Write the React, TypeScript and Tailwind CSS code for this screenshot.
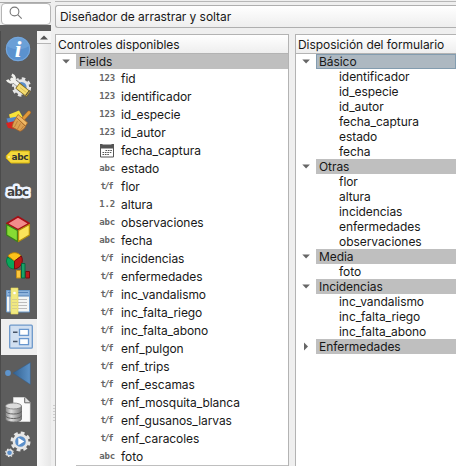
import React from "react";

type Kind = "123" | "abc" | "t/f" | "1.2" | "date";

const fields: [Kind, string][] = [
  ["123", "fid"],
  ["123", "identificador"],
  ["123", "id_especie"],
  ["123", "id_autor"],
  ["date", "fecha_captura"],
  ["abc", "estado"],
  ["t/f", "flor"],
  ["1.2", "altura"],
  ["abc", "observaciones"],
  ["abc", "fecha"],
  ["t/f", "incidencias"],
  ["t/f", "enfermedades"],
  ["t/f", "inc_vandalismo"],
  ["t/f", "inc_falta_riego"],
  ["t/f", "inc_falta_abono"],
  ["t/f", "enf_pulgon"],
  ["t/f", "enf_trips"],
  ["t/f", "enf_escamas"],
  ["t/f", "enf_mosquita_blanca"],
  ["t/f", "enf_gusanos_larvas"],
  ["t/f", "enf_caracoles"],
  ["abc", "foto"],
];

const groups: { name: string; items: string[]; selected?: boolean }[] = [
  {
    name: "Básico",
    selected: true,
    items: ["identificador", "id_especie", "id_autor", "fecha_captura", "estado", "fecha"],
  },
  { name: "Otras", items: ["flor", "altura", "incidencias", "enfermedades", "observaciones"] },
  { name: "Media", items: ["foto"] },
  { name: "Incidencias", items: ["inc_vandalismo", "inc_falta_riego", "inc_falta_abono"] },
  { name: "Enfermedades", items: [] },
];

function Gear({ cx, cy, r, dash }: { cx: number; cy: number; r: number; dash: string }) {
  return (
    <g>
      <circle cx={cx} cy={cy} r={r} fill="none" stroke="#e6e6e6" strokeWidth={r * 0.3} strokeDasharray={dash} />
      <circle cx={cx} cy={cy} r={r * 0.76} fill="#5b8fca" stroke="#e6e6e6" strokeWidth={r * 0.3} />
    </g>
  );
}

const icons: React.ReactNode[] = [
  <>
    <circle cx="18" cy="18" r="12.2" fill="#5b92cf" />
    <path d="M7 15a11.300 11.300 0 0 1 22 0c-6 4-15 5-22 0z" fill="#7badE0" opacity=".5" />
    <circle cx="18" cy="18" r="11.700" fill="none" stroke="#79a9dc" />
    <text x="18" y="26" textAnchor="middle" fontSize="24" fontStyle="italic" fontWeight="700" fontFamily="Liberation Serif, serif" fill="#fff">i</text>
  </>,
  <>
    <Gear cx={21.5} cy={20} r={8.4} dash="3.500 3.100" />
    <path d="M12 12 21 20" stroke="#5d5d5d" strokeWidth="5" />
    <path d="M12 12.500 20.500 19.500" stroke="#f1f1ed" strokeWidth="3.600" strokeLinecap="round" />
    <path d="M11.800 7.700c3 1.300 3.600 4.300 1.700 6.300s-5 1.700-6.200-1.200" fill="none" stroke="#f1f1ed" strokeWidth="2.800" />
    <path d="M17.500 18.500 28.500 27.200" stroke="#80671d" strokeWidth="7" />
    <path d="M18 19 28 26.800" stroke="#f5dd72" strokeWidth="5.500" />
    <path d="M25.500 28.500 29.500 23.500" stroke="#4c4530" strokeWidth="1.200" />
    <path d="M20 20.500 26.500 25.500" stroke="#d4b543" strokeWidth=".7" />
  </>,
  <>
    <path d="m9 11.500 10-4 4 7-12 4z" fill="#f7e239" />
    <path d="m6.500 15.500 11-2 1 5-10 3z" fill="#5688c9" />
    <path d="m6 20 9-2v8l-7-1z" fill="#d92320" />
    <path d="m23.500 15.500 5.500-6" stroke="#a86724" strokeWidth="4" strokeLinecap="round" />
    <path d="m23.500 15.500 5.500-6" stroke="#e09a3b" strokeWidth="2.700" strokeLinecap="round" />
    <path d="m16.500 14.500 9 9c-1 2-3 4-5.500 4.800L12 24c1-3 1-5 4.500-9.500z" fill="#dca153" stroke="#a76327" strokeWidth=".8" />
    <path d="m18 11.500 9.500 8.300-2 3.200-9.200-8.600z" fill="#efb865" stroke="#aa6720" strokeWidth=".8" />
    <path d="m17.500 18-3 6m6-3.500-3 5.500m6-3-3 4" stroke="#b27231" strokeWidth=".7" />
  </>,
  <>
    <path d="M11 12h18.300v12H11L6.300 19.200v-2.400z" fill="#f5d93b" stroke="#d7b40c" strokeLinejoin="round" />
    <circle cx="9" cy="18" r="1" fill="#fff6a4" />
    <text x="20" y="21.200" textAnchor="middle" fontSize="9" fontWeight="700" fontFamily="DejaVu Sans, sans-serif" textLength="17" fill="#333">abc</text>
  </>,
  <>
    <text x="18" y="21.300" textAnchor="middle" fontSize="12" fontWeight="700" fontFamily="DejaVu Sans, sans-serif" textLength="22" fill="#eef4ff" stroke="#eef4ff" strokeWidth="5" strokeLinejoin="round" aria-hidden="true">abc</text>
    <text x="18" y="21.300" textAnchor="middle" fontSize="12" fontWeight="700" fontFamily="DejaVu Sans, sans-serif" textLength="22" fill="#414141">abc</text>
  </>,
  <>
    <path d="m18 5.700 11.200 6.800L18 18.700 6.800 12.500z" fill="#f28b8b" stroke="#a50f16" strokeWidth="1.700" strokeLinejoin="round" />
    <path d="M6.600 13.500 17.500 19.500v11L6.600 24z" fill="#86db33" stroke="#39801b" strokeWidth="1.300" strokeLinejoin="round" />
    <path d="M29.400 13.500 18.500 19.500v11L29.400 24z" fill="#fbe45a" stroke="#b4900c" strokeWidth="1.300" strokeLinejoin="round" />
  </>,
  <>
    <path d="M14.500 14V22a8 8 0 0 1-7-12z" fill="#08a75b" stroke="#087642" />
    <path d="M14.500 14 8 9a8 8 0 0 1 13 0z" fill="#fcc21a" stroke="#b88408" />
    <path d="m14.500 14 6.800-5c2.600 5 .2 12-6.800 13z" fill="#bd1717" stroke="#760e0e" />
    <path d="M16.500 23.500h4V31h-4z" fill="#fcc63e" stroke="#c28e18" />
    <path d="M25.500 24.500h4V31h-4z" fill="#b81b1b" stroke="#740d0d" />
    <path d="M21.500 16.500h3.500V31h-3.500z" fill="#19a366" stroke="#096442" />
  </>,
  <>
    <path d="M6.500 7.500h23v21.500h-23z" fill="#f4f6f5" stroke="#6d9ac9" />
    <path d="M7 8h22v5H7z" fill="#8db3dc" />
    <path d="M8 9.500h20M7 13h22M10 7v22" stroke="#5482b7" />
    <path d="M12 16.500h15M12 19.500h15M12 22.500h15M12 25.500h15" stroke="#bcbcbc" />
    <path d="M11 5h7v26h-7z" fill="#f1e982" stroke="#e5d751" strokeWidth=".6" />
    <path d="M12 16.500h5M12 19.500h5M12 22.500h5M12 25.500h5" stroke="#d8d08a" />
    <circle cx="14.500" cy="10" r="1.300" fill="#fff" />
  </>,
  <>
    <rect x="9.700" y="6.200" width="22.600" height="23" rx="1" fill="#d1dff0" stroke="#6c98ca" strokeWidth="1.300" />
    <path d="M13 13.200h4.500M13 22.500h4.500" stroke="#475365" strokeWidth="1.600" />
    <path d="M19.500 10.300h9v6h-9zM19.500 19.600h9v6h-9z" fill="#fff" stroke="#6997ce" strokeWidth="1.300" />
  </>,
  <>
    <defs>
      <linearGradient id="arrow"><stop stopColor="#326191" /><stop offset="1" stopColor="#5d93c8" /></linearGradient>
    </defs>
    <path d="M13 18 30.300 7.500v22z" fill="url(#arrow)" stroke="#335d89" strokeWidth=".5" />
    <circle cx="8" cy="18" r="2.900" fill="#5e94cc" />
  </>,
  <>
    <path d="M13.500 6.500H25l5 5v19H13.500z" fill="#fafafa" stroke="#ddd" strokeWidth=".7" />
    <path d="M24.700 6.500v5.300H30" fill="#ddd" stroke="#666" />
    <defs>
      <linearGradient id="disk"><stop stopColor="#858585" /><stop offset=".35" stopColor="#dfdfdf" /><stop offset="1" stopColor="#777" /></linearGradient>
    </defs>
    <path d="M5.500 15v13c0 4 16 4 16 0V15z" fill="url(#disk)" stroke="#666" strokeWidth=".8" />
    <path d="M5.500 20c0 4 16 4 16 0M5.500 24.500c0 4 16 4 16 0" fill="none" stroke="#626262" />
    <ellipse cx="13.500" cy="15" rx="8" ry="3" fill="#dcdcdc" stroke="#777" strokeWidth=".8" />
  </>,
  <>
    <Gear cx={20.5} cy={14.5} r={8.7} dash="3.800 3.030" />
    <path d="m18.300 10.700 6 3.800-6 3.800z" fill="#fff" />
    <Gear cx={9.5} cy={25.8} r={3.8} dash="1.500 1.480" />
  </>,
];

function Sidebar() {
  return (
    <div className="w-[37px] shrink-0 border-l border-[#4b4b4b] bg-[#5d5d5d]">
      {icons.map((icon, i) => (
        <div key={i} className={i === 8 ? "h-9 bg-[#efefef]" : "h-9"}>
          <svg className="block h-9 w-9" viewBox="1 0 36 36" fill="none">
            {icon}
          </svg>
        </div>
      ))}
    </div>
  );
}

function TypeIcon({ kind }: { kind: Kind }) {
  return (
    <svg className="ml-[22px] block h-[18px] w-[18px] shrink-0" viewBox="0 0 18 18">
      {kind === "date" ? (
        <g>
          <path d="M2.500 4.500h13v11.500h-13z" fill="#fff" stroke="#555" />
          <path d="M2 3h14v4.500H2z" fill="#555" />
          <path d="M4.500 3h9" stroke="#fff" strokeWidth="1" />
          <path d="M7.500 9.500h6.500M4.500 11.500h9.500M4.500 13.500h6.500" stroke="#555" strokeWidth="1.200" strokeDasharray="1.600 .8" />
        </g>
      ) : (
        <text x={kind === "t/f" ? 2.5 : 1.2} y="11.700" fontSize="9" fontWeight="700" fontFamily="DejaVu Sans Mono, monospace" textLength={kind === "t/f" ? 13 : 16} fill="#666">
          {kind}
        </text>
      )}
    </svg>
  );
}

function Arrow({ closed = false }: { closed?: boolean }) {
  return (
    <svg className="h-[15px] w-5 shrink-0" viewBox="0 0 20 15">
      <path d={closed ? "M8 3.500 12 7.500 8 11.500z" : "M6.300 5.500h7.600L10.100 9.500z"} fill="#666" />
    </svg>
  );
}

function GroupRow({ name, selected = false, closed = false }: { name: string; selected?: boolean; closed?: boolean }) {
  return (
    <div className="flex h-[15px]">
      <Arrow closed={closed} />
      <div className={selected ? "h-[15px] grow bg-[#adb8c1] pl-[3px] outline -outline-offset-1 outline-[#839caf]" : "grow bg-[#bfbfbf] pl-[3px]"}>
        {name}
      </div>
    </div>
  );
}

function Header({ title }: { title: string }) {
  return (
    <div className="h-[19px] shrink-0 border-b border-[#b3b3b3] bg-linear-to-b from-white to-[#eeeeee] pl-0.5 leading-[19px]">
      {title}
    </div>
  );
}

export default function App() {
  return (
    <div className="flex h-[466px] w-[456px] overflow-hidden bg-[#efefef] [font-family:Inter,sans-serif] text-[12px] leading-[15px] tracking-[-0.06px] whitespace-nowrap text-[#181818]">
      <div className="flex w-[51px] shrink-0 flex-col">
        <div className="h-[3px] shrink-0 border-b border-[#aaa]" />
        <div className="ml-px h-[22px] w-[50px] shrink-0 rounded-sm border border-[#b5b5b5] bg-white">
          <svg className="ml-[7px] h-5 w-4" viewBox="0 0 16 20" fill="none" stroke="#777" strokeWidth="1.100">
            <circle cx="5.500" cy="7.500" r="4.400" />
            <path d="m8.700 10.700 4 4" />
          </svg>
        </div>
        <div className="h-1.5 shrink-0 bg-[#5d5d5d]" />
        <div className="flex min-h-0 grow">
          <Sidebar />
          <div className="w-[14px] bg-linear-to-r from-[#fafafa] to-[#e7e7e7]">
            <div className="h-[13px] border-b border-[#b5b5b5] bg-[#f5f5f5]">
              <svg className="block h-3 w-3.5" viewBox="0 0 14 12">
                <path d="m3 8.500 4-4 4 4z" fill="#555" />
              </svg>
            </div>
          </div>
        </div>
      </div>

      <div className="flex w-1 shrink-0 flex-col items-end justify-end pb-[44px]">
        <svg className="h-[17px] w-0.5" viewBox="0 0 2 17">
          <path d="M1 0v17" stroke="#aaa" strokeDasharray="1 2" />
        </svg>
      </div>

      <div className="flex w-[401px] shrink-0 flex-col">
        <div className="h-0.5 w-full shrink-0 border-b border-[#b7b7b7]" />
        <div className="mt-[3px] h-[23px] shrink-0 rounded-l-[3px] border border-r-0 border-[#afafaf] bg-linear-to-b from-white to-[#eeeeee] pl-1 leading-[22px]">
          Diseñador de arrastrar y soltar
        </div>
        <div className="mt-1.5 flex min-h-0 grow gap-[6px]">
          <section className="flex w-[234px] shrink-0 flex-col overflow-hidden border-x border-t border-[#b3b3b3] bg-white">
            <Header title="Controles disponibles" />
            <GroupRow name="Fields" />
            {fields.map(([kind, name]) => (
              <div key={name} className="flex h-[18px] shrink-0 leading-[20px]">
                <div className="w-5 shrink-0" />
                <TypeIcon kind={kind} />
                <span className="pl-[5px]">{name}</span>
              </div>
            ))}
            <div className="ml-5 h-[3px] shrink-0 bg-[#bfbfbf]" />
          </section>
          <section className="flex grow flex-col border-t border-l border-[#b3b3b3] bg-white">
            <Header title="Disposición del formulario" />
            {groups.map((group) => (
              <div key={group.name}>
                <GroupRow name={group.name} selected={group.selected} closed={group.items.length === 0} />
                {group.items.map((item) => (
                  <div key={item} className="h-[15px] pl-[43px]">
                    {item}
                  </div>
                ))}
              </div>
            ))}
          </section>
        </div>
      </div>
    </div>
  );
}
